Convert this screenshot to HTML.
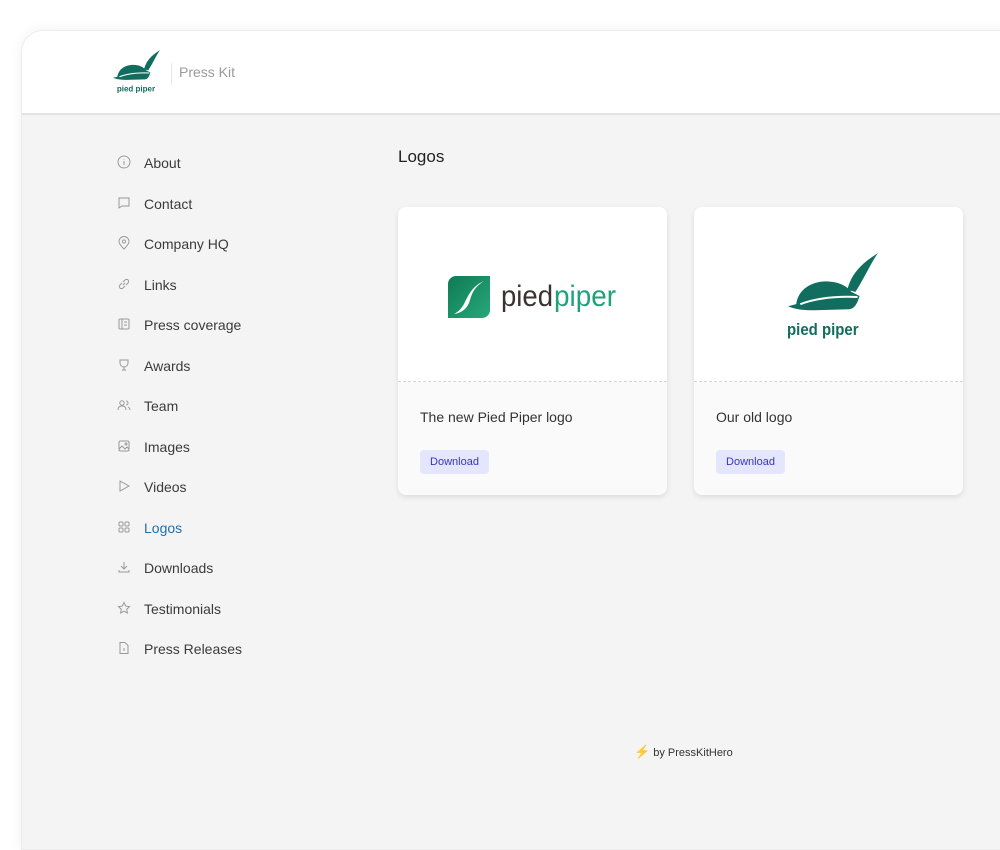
<!DOCTYPE html>
<html><head><meta charset="utf-8"><style>
*{margin:0;padding:0;box-sizing:border-box}
body{width:1000px;height:833px;background:#fff;font-family:"Liberation Sans",sans-serif;overflow:hidden;position:relative}
.panel{position:absolute;left:21px;top:30px;width:1000px;height:820px;background:#f4f4f4;border-radius:22px 0 0 0;box-shadow:0 0 14px rgba(0,0,0,.06);border:1px solid #ececec;overflow:hidden}
.hdr{position:absolute;left:0;top:0;right:0;height:84px;background:#fff;border-bottom:2px solid #e2e2e2}
.sep{position:absolute;left:149px;top:32px;width:1px;height:22px;background:#e6e6e6}
.pk{position:absolute;left:157px;top:33px;font-size:14px;color:#9a9a9a}
.item{position:absolute;left:122px;font-size:14px;color:#3b3b3b;line-height:18px}
.item svg{position:absolute;left:-27px;top:1px}
.item.act{color:#1f6fae}
h2{position:absolute;left:376px;top:116px;font-size:17px;font-weight:normal;color:#222}
.card{position:absolute;top:176px;width:269px;height:288px;background:#fafafa;border-radius:8px;box-shadow:0 2px 6px rgba(0,0,0,.10);overflow:hidden}
.card .img{position:absolute;left:0;top:0;right:0;height:175px;background:#fff;border-bottom:1px dashed #d5d5d5}
.card .t{position:absolute;left:22px;top:202px;font-size:14px;color:#333}
.card .b{position:absolute;left:22px;top:243px;width:69px;height:24px;background:#e3e6fd;border-radius:4px;color:#3b35c0;font-size:11px;text-align:center;line-height:24px}
.foot{position:absolute;left:612px;top:713px;font-size:11px;color:#333}
</style></head><body>
<div class="panel">
 <div class="hdr">
  <svg style="position:absolute;left:90px;top:18px" width="48" height="48" viewBox="0 0 90 90">
   <path fill="#116e5f" d="M10 52 C12 36 28 28 44 30 C54 31 60 35 64 40 L72 44 C70 50 68 56 62 57 L28 58 C18 58 8 57 2 54 Z M60 38 C64 22 74 12 90 2 C84 10 78 24 68 40 Z"/>
   <path fill="none" stroke="#fff" stroke-width="2" d="M14 52 C30 46 48 44 70 45"/>
   <text x="45" y="80" text-anchor="middle" font-family="Liberation Sans" font-weight="bold" font-size="15" fill="#116e5f">pied piper</text>
  </svg>
  <div class="sep"></div><div class="pk">Press Kit</div>
 </div>
 <div class="item" style="top:123px"><svg width="14" height="14" viewBox="0 0 14 14" fill="none" stroke="#999" stroke-width="1"><circle cx="7" cy="7" r="6"/><path d="M7 6v4M7 4v.5"/></svg>About</div>
 <div class="item" style="top:164px"><svg width="14" height="14" viewBox="0 0 14 14" fill="none" stroke="#999"><path d="M2 2h10v8H5l-3 2z"/></svg>Contact</div>
 <div class="item" style="top:204px"><svg width="14" height="14" viewBox="0 0 14 14" fill="none" stroke="#999"><path d="M7 13C3 9 2 7 2 5.5a5 5 0 0 1 10 0C12 7 11 9 7 13z"/><circle cx="7" cy="5.5" r="1.6"/></svg>Company HQ</div>
 <div class="item" style="top:245px"><svg width="14" height="14" viewBox="0 0 14 14" fill="none" stroke="#999"><path d="M6 8l2-2M5 6L3 8a2 2 0 0 0 3 3l2-2M9 8l2-2a2 2 0 0 0-3-3L6 5"/></svg>Links</div>
 <div class="item" style="top:285px"><svg width="14" height="14" viewBox="0 0 14 14" fill="none" stroke="#999"><rect x="2" y="2" width="10" height="10" rx="1"/><path d="M5 2v10M7 5h3M7 8h3"/></svg>Press coverage</div>
 <div class="item" style="top:326px"><svg width="14" height="14" viewBox="0 0 14 14" fill="none" stroke="#999"><path d="M3 2h8v3a4 4 0 0 1-8 0zM7 9v3M5 12h4"/></svg>Awards</div>
 <div class="item" style="top:366px"><svg width="14" height="14" viewBox="0 0 14 14" fill="none" stroke="#999"><circle cx="5" cy="5" r="2.2"/><path d="M1 12c0-3 2-4 4-4s4 1 4 4M9 3a2 2 0 0 1 0 4M11 9c1 .6 2 1.5 2 3"/></svg>Team</div>
 <div class="item" style="top:407px"><svg width="14" height="14" viewBox="0 0 14 14" fill="none" stroke="#999"><rect x="2" y="2" width="10" height="10" rx="1.5"/><path d="M2 10l3-3 3 3 2-2 2 2"/><circle cx="9" cy="5" r="1"/></svg>Images</div>
 <div class="item" style="top:447px"><svg width="14" height="14" viewBox="0 0 14 14" fill="none" stroke="#999"><path d="M3 2l9 5-9 5z"/></svg>Videos</div>
 <div class="item act" style="top:488px"><svg width="14" height="14" viewBox="0 0 14 14" fill="none" stroke="#999"><rect x="2" y="2" width="4" height="4" rx="1"/><rect x="8" y="2" width="4" height="4" rx="1"/><rect x="2" y="8" width="4" height="4" rx="1"/><rect x="8" y="8" width="4" height="4" rx="1"/></svg>Logos</div>
 <div class="item" style="top:528px"><svg width="14" height="14" viewBox="0 0 14 14" fill="none" stroke="#999"><path d="M7 2v7M4 6l3 3 3-3M2 10v2h10v-2"/></svg>Downloads</div>
 <div class="item" style="top:569px"><svg width="14" height="14" viewBox="0 0 14 14" fill="none" stroke="#999"><path d="M7 1.5l1.7 3.6 3.8.5-2.8 2.6.7 3.8L7 10.2 3.6 12l.7-3.8L1.5 5.6l3.8-.5z"/></svg>Testimonials</div>
 <div class="item" style="top:609px"><svg width="14" height="14" viewBox="0 0 14 14" fill="none" stroke="#999"><path d="M3 1.5h5l3 3v8H3z"/><path d="M7 7v3"/></svg>Press Releases</div>

 <h2>Logos</h2>
 <div class="card" style="left:376px">
  <div class="img">
   <svg style="position:absolute;left:50px;top:69px" width="180" height="44" viewBox="0 0 180 44">
    <defs><linearGradient id="g" x1="0" y1="0" x2="1" y2="1"><stop offset="0" stop-color="#0f7a55"/><stop offset="1" stop-color="#27a87a"/></linearGradient></defs>
    <path fill="url(#g)" d="M8 0H42V34a8 8 0 0 1-8 8H0V8a8 8 0 0 1 8-8z"/>
    <path fill="#fff" d="M36 5C24 10 20 20 16 28C13 33 10 36 6 38C14 37 20 32 22 24C24 16 28 10 36 5z"/>
    <text x="53" y="30" font-family="Liberation Sans" font-size="30" fill="#3a3330" textLength="52" lengthAdjust="spacingAndGlyphs">pied</text>
    <text x="106" y="30" font-family="Liberation Sans" font-size="30" fill="#1fa27a" textLength="62" lengthAdjust="spacingAndGlyphs">piper</text>
   </svg>
  </div>
  <div class="t">The new Pied Piper logo</div>
  <div class="b">Download</div>
 </div>
 <div class="card" style="left:672px">
  <div class="img">
   <svg style="position:absolute;left:92px;top:44px" width="92" height="90" viewBox="0 0 90 88">
    <path fill="#116e5f" d="M10 52 C12 36 28 28 44 30 C54 31 60 35 64 40 L72 44 C70 50 68 56 62 57 L28 58 C18 58 8 57 2 54 Z M60 38 C64 22 74 12 90 2 C84 10 78 24 68 40 Z"/>
    <path fill="none" stroke="#fff" stroke-width="2" d="M14 52 C30 46 48 44 70 45"/>
    <text x="36" y="82" text-anchor="middle" font-family="Liberation Sans" font-weight="bold" font-size="16" fill="#116e5f" textLength="70" lengthAdjust="spacingAndGlyphs">pied piper</text>
   </svg>
  </div>
  <div class="t">Our old logo</div>
  <div class="b">Download</div>
 </div>
 <div class="foot"><span style="color:#f2b51c;font-size:13px">⚡</span> by PressKitHero</div>
</div>
</body></html>
